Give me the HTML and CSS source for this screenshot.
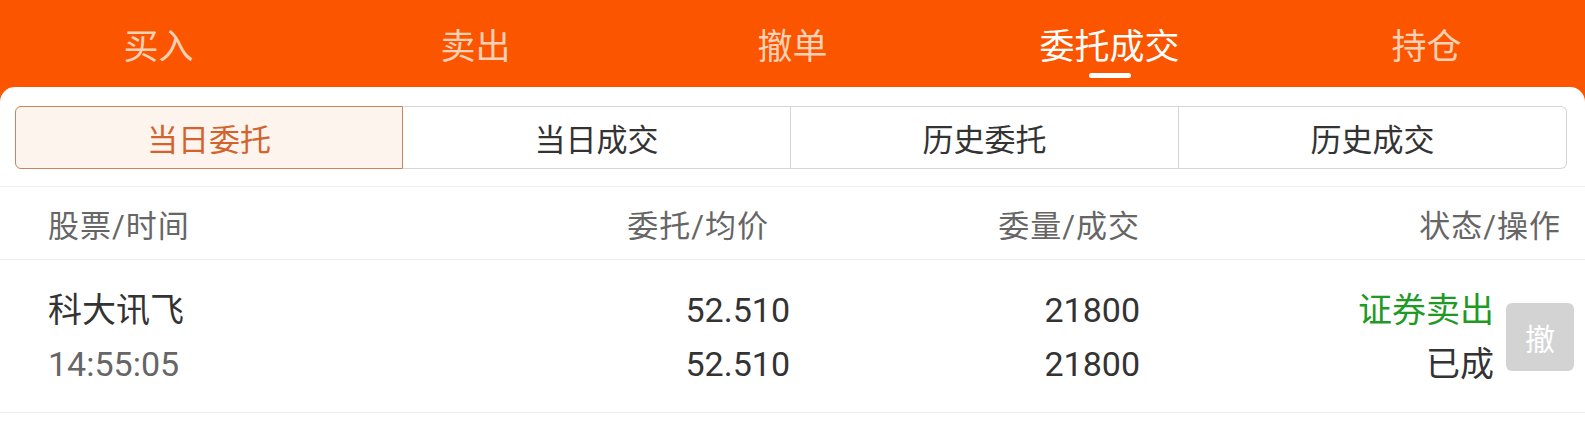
FILE: index.html
```html
<!DOCTYPE html>
<html lang="zh-CN">
<head>
<meta charset="utf-8">
<title>委托成交</title>
<link rel="stylesheet" href="styles.css">
</head>
<body>
<div class="page">
  <nav class="tabs">
    <div class="tab"><span class="tab-text">买入</span></div>
    <div class="tab"><span class="tab-text">卖出</span></div>
    <div class="tab"><span class="tab-text">撤单</span></div>
    <div class="tab active"><span class="tab-text">委托成交</span><span class="indicator"></span></div>
    <div class="tab"><span class="tab-text">持仓</span></div>
  </nav>
  <main class="card">
    <div class="segment">
      <div class="seg active">当日委托</div>
      <div class="seg">当日成交</div>
      <div class="seg">历史委托</div>
      <div class="seg">历史成交</div>
    </div>
    <div class="table">
      <div class="row head">
        <div class="c1">股票/时间</div>
        <div class="c2 head-price">委托/均价</div>
        <div class="c3">委量/成交</div>
        <div class="c4">状态/操作</div>
      </div>
      <div class="row data">
        <div class="c1">
          <div class="line">科大讯飞</div>
          <div class="line muted num">14:55:05</div>
        </div>
        <div class="c2">
          <div class="line num">52.510</div>
          <div class="line num">52.510</div>
        </div>
        <div class="c3">
          <div class="line num">21800</div>
          <div class="line num">21800</div>
        </div>
        <div class="c4 status">
          <div class="status-text">
            <div class="line green">证券卖出</div>
            <div class="line">已成</div>
          </div>
          <div class="cancel">撤</div>
        </div>
      </div>
    </div>
  </main>
</div>
</body>
</html>
```
FILE: styles.css
```css
html, body {
  margin: 0;
  padding: 0;
  background: #ffffff;
}
body {
  font-family: Roboto, "Noto Sans CJK SC", sans-serif;
  color: #333333;
}
.page {
  background: #fc5500;
  min-height: 432px;
}
.tabs {
  display: grid;
  grid-template-columns: repeat(5, 1fr);
  height: 87px;
}
.tab {
  display: flex;
  flex-direction: column;
  align-items: center;
  padding-top: 23px;
}
.tab-text {
  font-family: "Noto Sans CJK SC", sans-serif;
  font-size: 35px;
  line-height: 41px;
  color: #fcd1b5;
}
.tab.active .tab-text {
  color: #ffffff;
}
.indicator {
  width: 42px;
  height: 5px;
  margin-top: 9px;
  border-radius: 3px;
  background: #ffffff;
}
.card {
  background: #ffffff;
  border-radius: 15px 15px 0 0;
  padding-top: 19px;
  min-height: 326px;
}
.segment {
  display: grid;
  grid-template-columns: repeat(4, 1fr);
  margin: 0 18px 0 15px;
  height: 63px;
}
.seg {
  display: flex;
  align-items: center;
  justify-content: center;
  font-family: "Noto Sans CJK SC", sans-serif;
  font-size: 31px;
  color: #333333;
  border: 1px solid #d6d6d6;
  border-left: none;
}
.seg:first-child {
  border-left: 1px solid #d6d6d6;
  border-radius: 6px 0 0 6px;
}
.seg:last-child {
  border-radius: 0 6px 6px 0;
}
.seg.active {
  background: #fdf4ee;
  color: #d2632c;
  border-color: #c8845c;
}
.table {
  margin-top: 17px;
  border-top: 1px solid #f0f0f0;
}
.row {
  display: grid;
  grid-template-columns: 402px 340px 350px 1fr;
  padding-left: 48px;
  border-bottom: 1px solid #ececec;
}
.row.head {
  height: 72px;
  align-items: center;
  padding-right: 24px;
  font-size: 31px;
  letter-spacing: 1px;
  color: #666666;
}
.c2, .c3, .c4 {
  text-align: right;
}
.head-price {
  padding-right: 21px;
}
.row.data {
  padding: 23px 11px 21px 48px;
  font-size: 34px;
  align-items: center;
}
.line {
  height: 54px;
  line-height: 54px;
  white-space: nowrap;
}
.muted {
  color: #666666;
}
.green {
  color: #1f9a25;
}
.status {
  display: flex;
  justify-content: flex-end;
  align-items: center;
  gap: 12px;
}
.cancel {
  width: 68px;
  height: 68px;
  border-radius: 6px;
  background: #d3d3d3;
  color: #ffffff;
  font-size: 30px;
  display: flex;
  align-items: center;
  justify-content: center;
}
```
